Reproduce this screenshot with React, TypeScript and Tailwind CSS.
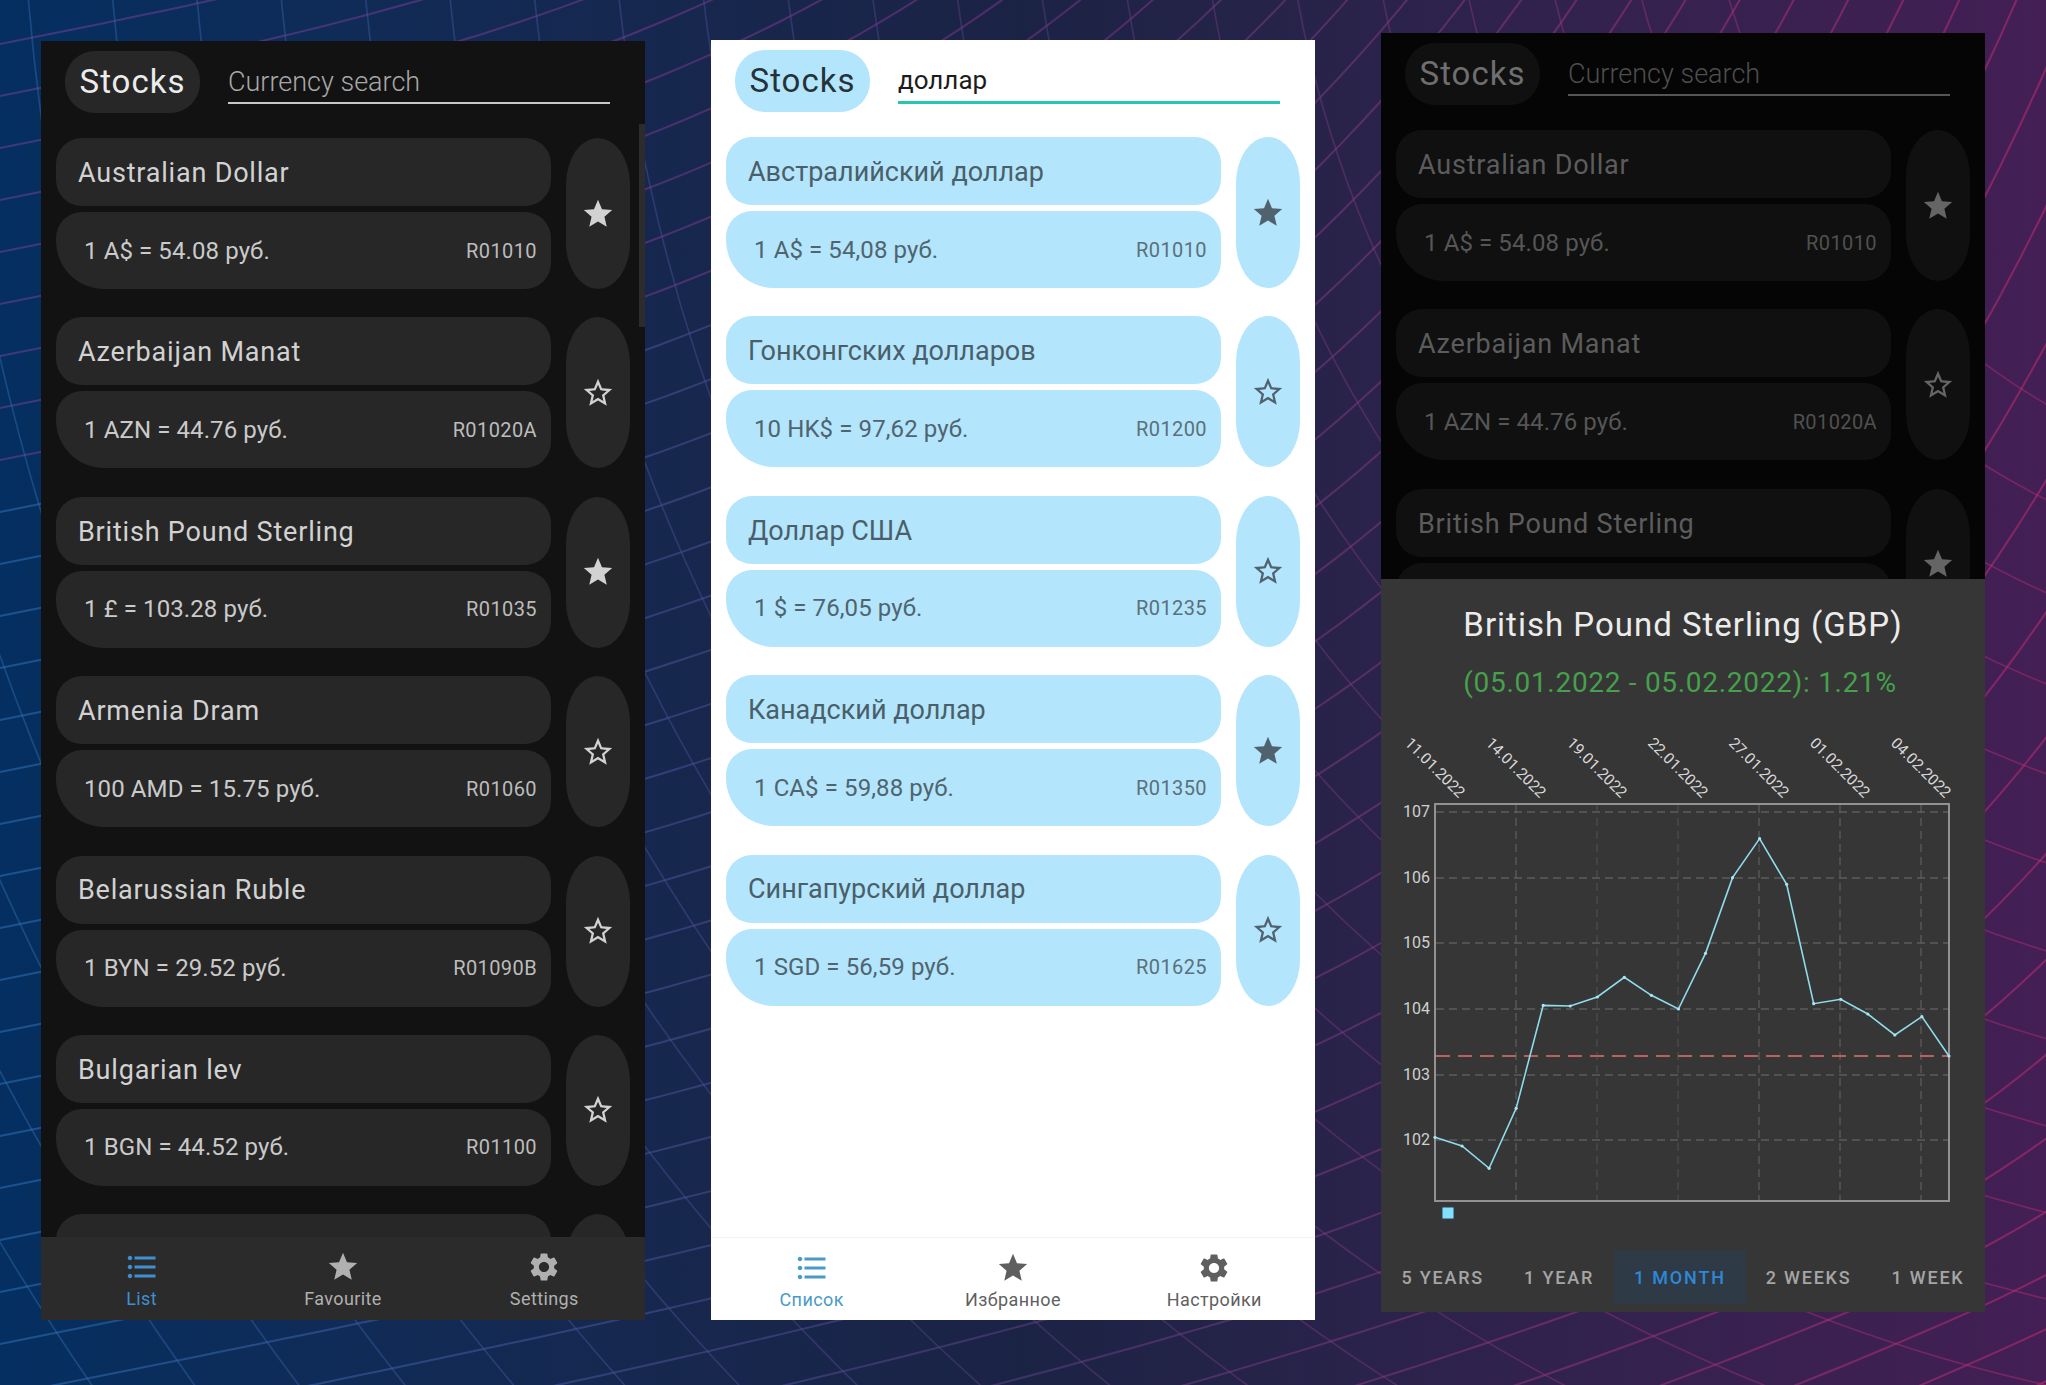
import { MdFormatListBulleted, MdSettings, MdStar, MdStarBorder } from "react-icons/md";

interface Currency {
  name: string;
  rate: string;
  code: string;
  fav?: boolean;
}

const listEn: Currency[] = [
  { name: "Australian Dollar", rate: "1 A$ = 54.08 руб.", code: "R01010", fav: true },
  { name: "Azerbaijan Manat", rate: "1 AZN = 44.76 руб.", code: "R01020A" },
  { name: "British Pound Sterling", rate: "1 £ = 103.28 руб.", code: "R01035", fav: true },
  { name: "Armenia Dram", rate: "100 AMD = 15.75 руб.", code: "R01060" },
  { name: "Belarussian Ruble", rate: "1 BYN = 29.52 руб.", code: "R01090B" },
  { name: "Bulgarian lev", rate: "1 BGN = 44.52 руб.", code: "R01100" },
  // only the top of this row shows above the nav bar
  { name: "", rate: "", code: "", },
];

const listDim: Currency[] = [
  listEn[0],
  listEn[1],
  // the sheet covers the rate line of this row
  { name: "British Pound Sterling", rate: "", code: "", fav: true },
];

const listRu: Currency[] = [
  { name: "Австралийский доллар", rate: "1 A$ = 54,08 руб.", code: "R01010", fav: true },
  { name: "Гонконгских долларов", rate: "10 HK$ = 97,62 руб.", code: "R01200" },
  { name: "Доллар США", rate: "1 $ = 76,05 руб.", code: "R01235" },
  { name: "Канадский доллар", rate: "1 CA$ = 59,88 руб.", code: "R01350", fav: true },
  { name: "Сингапурский доллар", rate: "1 SGD = 56,59 руб.", code: "R01625" },
];

const darkTheme = {
  panel: "bg-[#121212]",
  pill: "bg-[#272727]",
  stocks: "text-[#ececec]",
  title: "text-[#d2d2d2] tracking-[0.8px]",
  rate: "text-[#cacaca]",
  code: "text-[#bcbcbc]",
  star: "text-[#d2d2d2]",
};

const lightTheme = {
  panel: "bg-white",
  pill: "bg-[#b3e5fc]",
  stocks: "text-[#263238]",
  title: "text-[#4a5f69]",
  rate: "text-[#4f646e]",
  code: "text-[#5b707a]",
  star: "text-[#50626e]",
};

const dimTheme = {
  panel: "bg-[#050505]",
  pill: "bg-[#101010]",
  stocks: "text-[#6f6f6f]",
  title: "text-[#5c5c5c] tracking-[0.8px]",
  rate: "text-[#565656]",
  code: "text-[#505050]",
  star: "text-[#656565]",
};

type Theme = typeof darkTheme;

function Header({ theme, children }: { theme: Theme; children: React.ReactNode }) {
  return (
    <div className="flex h-[97px] shrink-0 items-start pl-6 pt-[10px]">
      <div className={`flex h-[62px] w-[135px] items-center justify-center rounded-[30px] text-[33px] tracking-[1px] ${theme.pill} ${theme.stocks}`}>
        Stocks
      </div>
      {children}
    </div>
  );
}

function Row({ item, theme }: { item: Currency; theme: Theme }) {
  const Star = item.fav ? MdStar : MdStarBorder;
  return (
    <div className="flex shrink-0 gap-[15px]">
      <div className="flex w-[495px] flex-col gap-[6px]">
        <div className={`flex h-[68px] items-center rounded-[26px] pl-[22px] pt-[2px] text-[27px] ${theme.pill} ${theme.title}`}>
          {item.name}
        </div>
        <div className={`flex h-[77px] items-center justify-between rounded-[26px_26px_26px_48px] pl-[28px] pr-[14px] ${theme.pill}`}>
          <span className={`text-[24px] tracking-[0.1px] ${theme.rate}`}>{item.rate}</span>
          <span className={`text-[20px] tracking-[0.4px] ${theme.code}`}>{item.code}</span>
        </div>
      </div>
      <div className={`flex h-[151px] w-16 items-center justify-center rounded-[32px/46px] ${theme.pill}`}>
        <Star className={`h-[34px] w-[34px] ${theme.star}`} />
      </div>
    </div>
  );
}

function List({ items, theme }: { items: Currency[]; theme: Theme }) {
  return (
    <div className="flex min-h-0 flex-1 flex-col gap-[28.4px] overflow-hidden px-[15px]">
      {items.map((item, i) => (
        <Row key={i} item={item} theme={theme} />
      ))}
    </div>
  );
}

function BottomNav({ labels, light }: { labels: string[]; light?: boolean }) {
  const idle = light ? "text-[#5f5f5f]" : "text-[#b0b0b0]";
  const active = light ? "text-[#4a9ac9]" : "text-[#3f90d2]";
  const wrap = light ? "bg-white border-t border-[#f3f3f3]" : "bg-[#2b2b2b]";
  const icons = [MdFormatListBulleted, MdStar, MdSettings];
  return (
    <div className={`grid h-[83px] shrink-0 grid-cols-3 pt-[13px] ${wrap}`}>
      {labels.map((label, i) => {
        const Icon = icons[i];
        return (
          <div key={label} className={`flex flex-col items-center ${i === 0 ? active : idle}`}>
            <Icon className={i === 0 ? "-my-px h-9 w-9" : "h-[34px] w-[34px]"} />
            <span className="mt-[3px] text-[18px] leading-[24px] tracking-[0.4px]">{label}</span>
          </div>
        );
      })}
    </div>
  );
}

const points = [892, 918, 985, 805, 496, 498, 471, 412, 466, 507, 340, 113, -4, 133, 491, 478, 522, 585, 530, 648];
const linePoints = points.map((p, i) => [1435 + i * 27.05, 840 + p / 3] as const);
const dates = ["11.01.2022", "14.01.2022", "19.01.2022", "22.01.2022", "27.01.2022", "01.02.2022", "04.02.2022"];
const yLabels: [string, number][] = [
  ["107", 811],
  ["106", 877],
  ["105", 942],
  ["104", 1008],
  ["103", 1074],
  ["102", 1139],
];
const xGrid = [1516, 1597, 1678, 1759, 1840, 1921];

function Chart() {
  return (
    <svg viewBox="1381 720 604 505" className="mt-[19px] block h-[505px] w-[604px] shrink-0" fontFamily="Roboto, sans-serif">
      {dates.map((d, i) => (
        <text key={d} x={1404 + i * 81} y={744} fontSize={15.4} fill="#d8d8d8" transform={`rotate(45 ${1404 + i * 81} 744)`}>
          {d}
        </text>
      ))}
      {yLabels.map(([label, y]) => (
        <g key={label}>
          <text x={1403} y={y + 6} fontSize={16} fill="#d0d0d0">
            {label}
          </text>
          <line x1={1436} x2={1948} y1={y + 1} y2={y + 1} stroke="#6e6e6e" strokeWidth={1} strokeDasharray="8 5" />
        </g>
      ))}
      {xGrid.map((x, i) => (
        <line key={x} x1={x} x2={x} y1={805} y2={1200} stroke={i === 1 || i === 2 ? "#525252" : "#666666"} strokeWidth={1} strokeDasharray="8 5" />
      ))}
      <rect x={1435} y={804} width={514} height={397} fill="none" stroke="#929292" strokeWidth={2} />
      <line x1={1436} x2={1948} y1={1056} y2={1056} stroke="#b8615f" strokeWidth={2} strokeDasharray="14 8" />
      <polyline points={linePoints.map((p) => p.join(",")).join(" ")} fill="none" stroke="#8fdcec" strokeWidth={1.6} />
      {linePoints.map(([x, y]) => (
        <circle key={x} cx={x} cy={y} r={1.6} fill="#a9e6f2" />
      ))}
      <rect x={1442} y={1207} width={12} height={12} fill="#84e0ff" stroke="#2b3f4b" strokeWidth={1} />
    </svg>
  );
}

function ChartSheet() {
  const tabs = ["5 YEARS", "1 YEAR", "1 MONTH", "2 WEEKS", "1 WEEK"];
  return (
    <div className="flex h-[733px] shrink-0 flex-col bg-[#363636] pt-[26px]">
      <div className="text-center text-[33px] leading-[40px] tracking-[1px] text-[#ececec]">British Pound Sterling (GBP)</div>
      <div className="mt-5 pr-[6px] text-center text-[28px] leading-[36px] tracking-[0.7px] text-[#46a04c]">(05.01.2022 - 05.02.2022): 1.21%</div>
      <Chart />
      <div className="mt-[25px] flex h-[54px] justify-center">
        {tabs.map((t) => (
          <div
            key={t}
            className={`flex items-center px-[20px] text-[18px] font-medium tracking-[1.8px] ${
              t === "1 MONTH" ? "bg-[#2e3a45] text-[#2e88d8]" : "text-[#a5a5a5]"
            }`}
          >
            {t}
          </div>
        ))}
      </div>
    </div>
  );
}

// rising lines: shallow on the left and along the bottom, steep at the top right
function risingLine(startY: number) {
  const pts: string[] = [];
  let y = startY;
  for (let x = -40; x <= 2080; x += 20) {
    pts.push(`${x},${y.toFixed(1)}`);
    const t = Math.max(0, x / 2046);
    const k = Math.min(1, Math.max(0.12, 1 - y / 1500));
    y -= 20 * (0.2 + 2.2 * t * t * k);
  }
  return pts.join(" ");
}

function Backdrop() {
  const rising = Array.from({ length: 64 }, (_, i) => i * 52);
  const falling = Array.from({ length: 40 }, (_, i) => 700 + i * 84);
  return (
    <svg className="absolute inset-0 h-full w-full" viewBox="0 0 2046 1385" preserveAspectRatio="none">
      <defs>
        <linearGradient id="lines" gradientUnits="userSpaceOnUse" x1="0" y1="0" x2="2046" y2="0">
          <stop offset="0" stopColor="#2d6fb5" />
          <stop offset="0.5" stopColor="#5c3f86" />
          <stop offset="1" stopColor="#c22a70" />
        </linearGradient>
        <linearGradient id="linesTop" gradientUnits="userSpaceOnUse" x1="0" y1="0" x2="2046" y2="0">
          <stop offset="0" stopColor="#6f3f96" />
          <stop offset="0.5" stopColor="#7a3388" />
          <stop offset="1" stopColor="#c22a70" />
        </linearGradient>
      </defs>
      {rising.map((y0) => (
        <polyline key={y0} points={risingLine(y0)} fill="none" stroke={y0 < 480 ? "url(#linesTop)" : "url(#lines)"} strokeWidth={2} opacity={0.55} />
      ))}
      {falling.map((r) => (
        <circle key={r} cx={2400} cy={-200} r={r} fill="none" stroke="url(#lines)" strokeWidth={1.6} opacity={0.45} />
      ))}
    </svg>
  );
}

export default function App() {
  return (
    <div className="relative h-[1385px] w-[2046px] overflow-hidden bg-gradient-to-r from-[#042f60] via-[#1b2345] to-[#431f55] font-['Roboto',sans-serif]">
      <Backdrop />
      <div className="relative flex items-start gap-[66px] pl-[41px]">
        <div className={`relative mt-[41px] flex h-[1279px] w-[604px] flex-col ${darkTheme.panel}`}>
          <Header theme={darkTheme}>
            <div className="ml-7 flex h-[53px] w-[382px] items-center border-b-2 border-[#c8c8c8] pt-[12px] text-[27px] font-light text-[#a8a8a8]">
              Currency search
            </div>
          </Header>
          <List items={listEn} theme={darkTheme} />
          <div className="absolute right-0 top-[83px] h-[203px] w-[6px] bg-[#2c2c2c]" />
          <BottomNav labels={["List", "Favourite", "Settings"]} />
        </div>

        <div className={`mt-10 flex h-[1280px] w-[604px] flex-col ${lightTheme.panel}`}>
          <Header theme={lightTheme}>
            <div className="ml-7 flex h-[54px] w-[382px] items-center border-b-[3px] border-[#26c6b0] pt-[10px] text-[26px] text-[#1c1c1c]">
              доллар
            </div>
          </Header>
          <List items={listRu} theme={lightTheme} />
          <BottomNav labels={["Список", "Избранное", "Настройки"]} light />
        </div>

        <div className={`mt-[33px] flex h-[1279px] w-[604px] flex-col ${dimTheme.panel}`}>
          <Header theme={dimTheme}>
            <div className="ml-7 flex h-[53px] w-[382px] items-center border-b-2 border-[#555555] pt-[12px] text-[27px] font-light text-[#4e4e4e]">
              Currency search
            </div>
          </Header>
          <List items={listDim} theme={dimTheme} />
          <ChartSheet />
        </div>
      </div>
    </div>
  );
}
